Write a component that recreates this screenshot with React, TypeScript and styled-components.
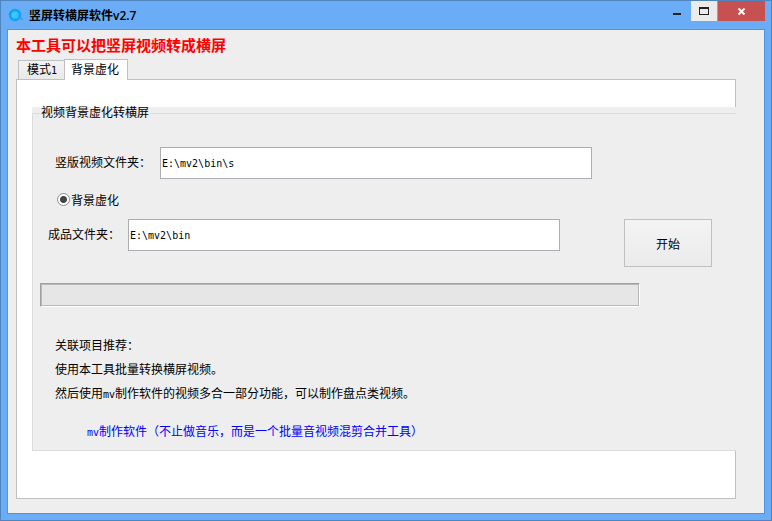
import React, { useState } from "react";
import styled, { createGlobalStyle } from "styled-components";

const GlobalStyle = createGlobalStyle`
  *, *::before, *::after { box-sizing: border-box; }
  body {
    margin: 0;
    color: #000;
    font-family: "Liberation Sans", "Noto Sans CJK SC", sans-serif;
    font-size: 12px;
  }
  input, button { font: inherit; color: inherit; }
`;

const Window = styled.div`
  display: flex;
  flex-direction: column;
  min-height: 100vh;
  padding: 0 6px 6px;
  border: 1px solid #4f84bd;
  background: #6aadf6;
`;

const TitleBar = styled.header`
  display: flex;
  align-items: flex-start;
  height: 28px;
`;

const AppTitle = styled.h1`
  display: flex;
  flex: 1;
  align-items: center;
  gap: 6px;
  height: 28px;
  margin: 0;
  padding-left: 1px;
  font-family: "Open Sans", "Noto Sans CJK SC", sans-serif;
  font-size: 12px;
  font-weight: 600;
`;

const CaptionButton = styled.button<{ $kind: "min" | "max" | "close" }>`
  display: grid;
  place-items: center;
  width: ${(p) => (p.$kind === "close" ? 47 : p.$kind === "max" ? 26 : 28)}px;
  height: 20px;
  margin-left: ${(p) => (p.$kind === "close" ? 1 : 0)}px;
  padding: 0;
  border: 0;
  background: ${(p) =>
    p.$kind === "close" ? "#c75050" : p.$kind === "max" ? "#ebebeb" : "transparent"};
`;

const Client = styled.main`
  flex: 1;
  padding: 6px 28px 14px 8px;
  border: 1px solid #5593d3;
  background: #eee;
`;

const Headline = styled.h2`
  margin: 0 0 3px;
  color: #f00;
  font-size: 15px;
  font-weight: 700;
  line-height: 20px;
`;

const TabList = styled.div`
  display: flex;
  align-items: flex-end;
  position: relative;
  height: 21px;
  margin-bottom: -1px;
  padding-left: 2px;
`;

const Tab = styled.button<{ $active: boolean }>`
  height: ${(p) => (p.$active ? 21 : 19)}px;
  margin-bottom: ${(p) => (p.$active ? 0 : 1)}px;
  padding: 0 ${(p) => (p.$active ? 8 : 7)}px 0 ${(p) => (p.$active ? 6 : 8)}px;
  border: 1px solid #c0c0c0;
  border-bottom: 0;
  background: ${(p) => (p.$active ? "#fff" : "linear-gradient(#f2f2f2, #e9e9e9)")};
  line-height: 18px;

  &:first-child { border-right-width: 0; }
`;

const TabPanel = styled.section`
  padding: 27px 0 47px 15px;
  border: 1px solid #c0c0c0;
  background: #fff;
`;

const GroupArea = styled.div`
  margin-right: -1px;
  background: #eee;
`;

const Group = styled.fieldset`
  min-width: 0;
  margin: 0;
  padding: 28px 0 6px 7px;
  border: solid #dcdcdc;
  border-width: 1px 0 1px 1px;
`;

const Legend = styled.legend`
  padding: 0 1px;
  line-height: 12px;
`;

const Row = styled.div`
  display: flex;
  align-items: flex-start;
`;

const SourceRow = styled(Row)`
  padding: 0 144px 0 15px;
`;

const OutputRow = styled(Row)`
  padding: 0 24px 0 8px;
`;

const FieldLabel = styled.label<{ $wide?: boolean }>`
  flex: none;
  width: ${(p) => (p.$wide ? 105 : 80)}px;
  line-height: 33px;
`;

const PathInput = styled.input`
  flex: 1;
  min-width: 0;
  height: 32px;
  padding: 0 1px;
  border: 1px solid #abadb3;
  border-radius: 0;
  background: #fff;
  font-family: "DejaVu Sans Mono", "Noto Sans CJK SC", monospace;
  font-size: 10px;
  outline: none;
`;

const RadioLabel = styled.label`
  display: flex;
  align-items: center;
  gap: 1px;
  height: 39px;
  padding-left: 17px;
`;

const Radio = styled.input`
  appearance: none;
  width: 13px;
  height: 13px;
  margin: 0;
  border: 1px solid #8e8f8f;
  border-radius: 50%;
  background: #fff;

  &:checked { background: radial-gradient(circle, #444 3px, #fff 4px); }
`;

const StartButton = styled.button`
  flex: none;
  width: 88px;
  height: 48px;
  margin-left: 64px;
  border: 1px solid #c0c0c0;
  background: linear-gradient(#f3f3f3, #ebebeb);
`;

const ProgressTrack = styled.div`
  height: 24px;
  margin: 16px 96px 27px 0;
  border: solid;
  border-width: 1px;
  border-color: #a0a0a0 #fff #fff #a0a0a0;
  background: #e6e6e6;
  box-shadow: inset 0 0 0 1px #b8b8b8;
`;

const Note = styled.p`
  margin: 0;
  padding-left: 15px;
  line-height: 24px;
`;

const Latin = styled.span`
  font-family: "DejaVu Sans Mono", monospace;
  font-size: 10px;
  line-height: 1;
`;

const ToolLink = styled.a`
  display: block;
  width: fit-content;
  margin: 14px 0 0 47px;
  color: #00f;
  line-height: 24px;
  text-decoration: none;
`;

const AppIcon = () => (
  <svg width="15" height="14" viewBox="0 0 15 14" aria-hidden="true">
    <circle cx="7" cy="7" r="5" fill="#4cb4f6" stroke="#08a5f6" strokeWidth="2.4" />
    <path d="M5.5 4.5v5M8.5 4.5L6 7l2.5 2.5" fill="none" stroke="#20dce8" strokeWidth="1.2" />
    <path d="M11 9.5l3.5 2" stroke="#4298dd" strokeWidth="1.5" />
  </svg>
);

export default function App() {
  const [source, setSource] = useState("E:\\mv2\\bin\\s");
  const [output, setOutput] = useState("E:\\mv2\\bin");

  return (
    <>
      <GlobalStyle />
      <Window>
        <TitleBar>
          <AppTitle>
            <AppIcon />
            竖屏转横屏软件v2.7
          </AppTitle>
          <CaptionButton $kind="min" aria-label="最小化">
            <svg width="28" height="20" viewBox="0 0 28 20">
              <path d="M10 12h8v2h-8z" fill="#222" />
            </svg>
          </CaptionButton>
          <CaptionButton $kind="max" aria-label="最大化">
            <svg width="26" height="20" viewBox="0 0 26 20">
              <path d="M8 6h10v8H8zM9 8v5h8V8z" fill="#222" fillRule="evenodd" />
            </svg>
          </CaptionButton>
          <CaptionButton $kind="close" aria-label="关闭">
            <svg width="47" height="20" viewBox="0 0 47 20">
              <path d="M20.5 7.5l6 6M26.5 7.5l-6 6" stroke="#fff" strokeWidth="2" />
            </svg>
          </CaptionButton>
        </TitleBar>
        <Client>
          <Headline>本工具可以把竖屏视频转成横屏</Headline>
          <TabList role="tablist">
            <Tab $active={false} role="tab" aria-selected={false}>
              模式<Latin>1</Latin>
            </Tab>
            <Tab $active role="tab" aria-selected aria-controls="blur-panel">
              背景虚化
            </Tab>
          </TabList>
          <TabPanel id="blur-panel" role="tabpanel">
            <GroupArea>
              <Group>
                <Legend>视频背景虚化转横屏</Legend>
                <SourceRow>
                  <FieldLabel $wide htmlFor="source">竖版视频文件夹：</FieldLabel>
                  <PathInput
                    id="source"
                    value={source}
                    onChange={(e) => setSource(e.target.value)}
                  />
                </SourceRow>
                <RadioLabel>
                  <Radio type="radio" name="mode" defaultChecked />
                  背景虚化
                </RadioLabel>
                <OutputRow>
                  <FieldLabel htmlFor="output">成品文件夹：</FieldLabel>
                  <PathInput
                    id="output"
                    value={output}
                    onChange={(e) => setOutput(e.target.value)}
                  />
                  <StartButton>开始</StartButton>
                </OutputRow>
                <ProgressTrack role="progressbar" aria-label="转换进度" aria-valuenow={0} />
                <Note>关联项目推荐：</Note>
                <Note>使用本工具批量转换横屏视频。</Note>
                <Note>
                  然后使用<Latin>mv</Latin>制作软件的视频多合一部分功能，可以制作盘点类视频。
                </Note>
                <ToolLink href="#mv">
                  <Latin>mv</Latin>制作软件（不止做音乐，而是一个批量音视频混剪合并工具）
                </ToolLink>
              </Group>
            </GroupArea>
          </TabPanel>
        </Client>
      </Window>
    </>
  );
}
